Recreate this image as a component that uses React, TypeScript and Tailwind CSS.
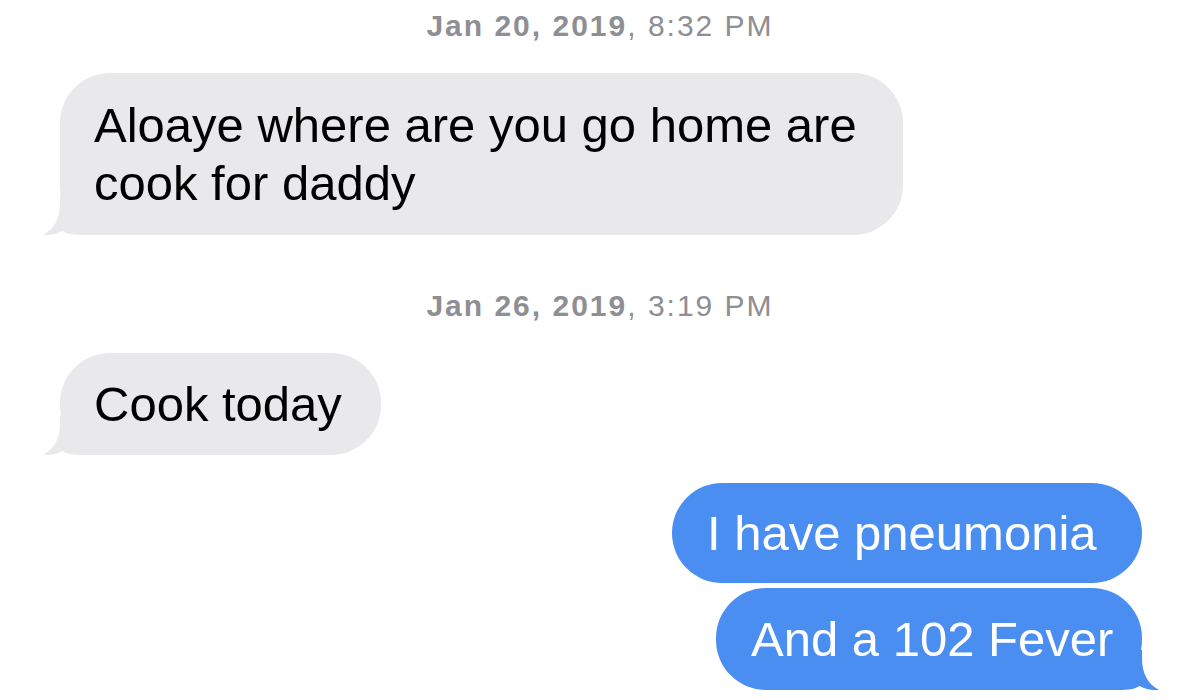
import React from "react";

const GRAY = "#e9e9eb";
const BLUE = "#4b8ef1";

function Tail({ color, side }: { color: string; side: "left" | "right" }) {
  // Bubble tail: anchored to the bottom corner on the sender's side
  const pos = side === "left" ? "left-[-17px]" : "right-[-17px] -scale-x-100";
  return (
    <svg
      className={`absolute bottom-0 ${pos}`}
      width="67"
      height="40"
      viewBox="0 0 67 40"
    >
      <path
        d="M17,0 L17,8 C17,24 11,34 0,40 C7,40.6 13.5,39 19.5,36 C24.5,39.2 31,40 40,40 L67,40 L67,0 Z"
        fill={color}
      />
    </svg>
  );
}

function Stamp({ day, time }: { day: string; time: string }) {
  return (
    <div className="flex justify-center text-[30px] leading-[30px] tracking-[2px] text-[#8e8e93]">
      <span>
        <span className="font-bold">{day}</span>, {time}
      </span>
    </div>
  );
}

function Incoming({
  text,
  width,
  py,
}: {
  text: string;
  width: string;
  py: string;
}) {
  return (
    <div className="flex pl-[60px]">
      <div
        className={`relative ${width} ${py} rounded-[50px] bg-[#e9e9eb] pl-[34px] pr-[30px] text-black`}
      >
        <Tail color={GRAY} side="left" />
        <span className="relative">{text}</span>
      </div>
    </div>
  );
}

function Outgoing({
  text,
  width,
  py,
  tail,
}: {
  text: string;
  width: string;
  py: string;
  tail?: boolean;
}) {
  return (
    <div className="flex justify-end pr-[58px]">
      <div
        className={`relative ${width} ${py} rounded-[50px] bg-[#4b8ef1] pl-[35px] text-white`}
      >
        {tail && <Tail color={BLUE} side="right" />}
        <span className="relative whitespace-nowrap">{text}</span>
      </div>
    </div>
  );
}

export default function App() {
  return (
    <div
      className="h-[700px] w-[1200px] overflow-hidden bg-white pt-[11px] text-[49px] leading-[58px]"
      style={{ fontFamily: '"Liberation Sans", Arial, sans-serif' }}
    >
      <Stamp day="Jan 20, 2019" time="8:32 PM" />
      <div className="mt-[32px]">
        <Incoming
          text="Aloaye where are you go home are cook for daddy"
          width="w-[843px]"
          py="py-[23px]"
        />
      </div>
      <div className="mt-[56px]">
        <Stamp day="Jan 26, 2019" time="3:19 PM" />
      </div>
      <div className="mt-[32px]">
        <Incoming text="Cook today" width="w-[321px]" py="py-[22px]" />
      </div>
      <div className="mt-[28px] flex flex-col gap-[5px]">
        <Outgoing text="I have pneumonia" width="w-[470px]" py="py-[21px]" />
        <Outgoing
          text="And a 102 Fever"
          width="w-[426px]"
          py="py-[22px]"
          tail
        />
      </div>
    </div>
  );
}
